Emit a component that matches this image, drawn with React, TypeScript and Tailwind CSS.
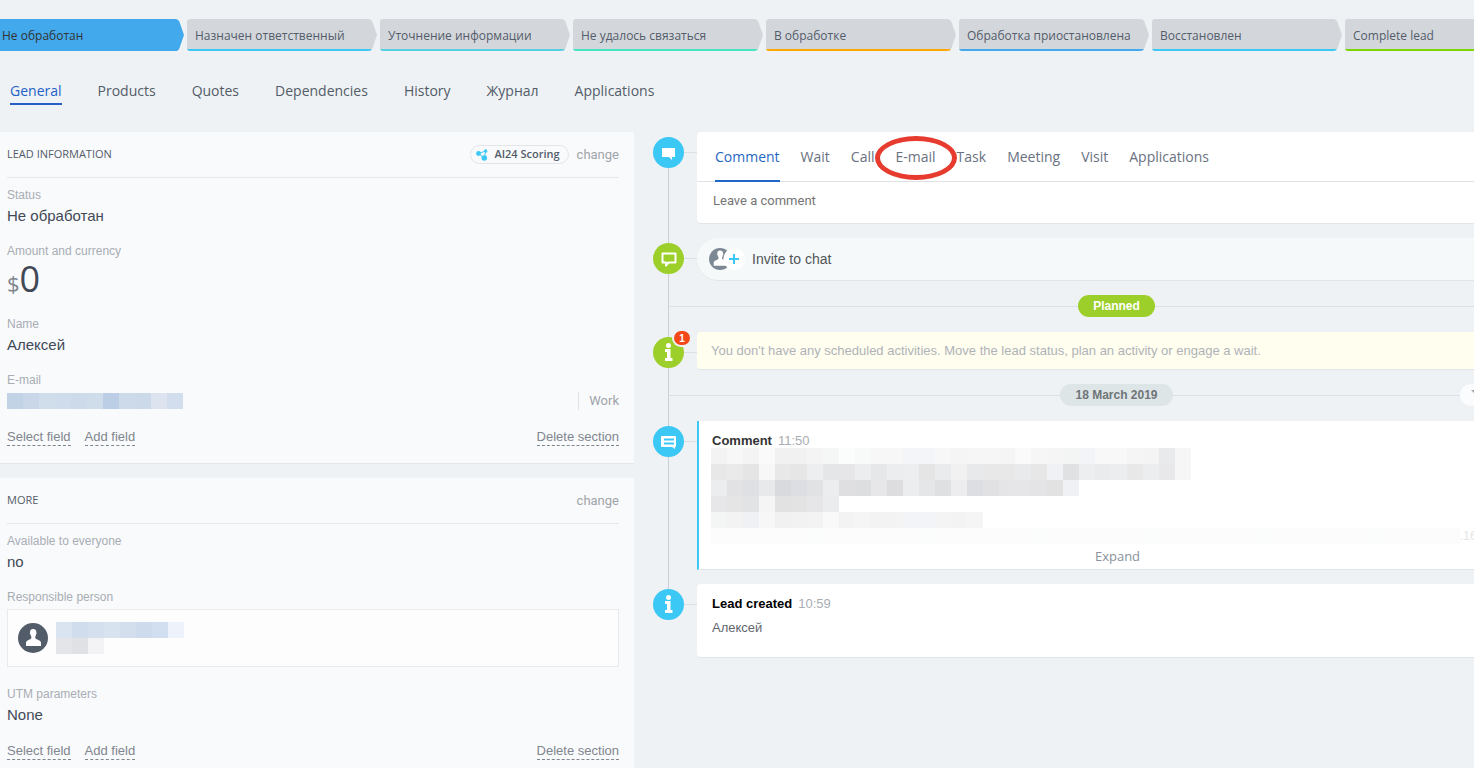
import { type ReactNode } from 'react';

const stages = [
  { title: 'Не обработан', color: '#42a9ed', active: true },
  { title: 'Назначен ответственный', color: '#3bc8f5' },
  { title: 'Уточнение информации', color: '#55d0e0' },
  { title: 'Не удалось связаться', color: '#47e4c2' },
  { title: 'В обработке', color: '#ffa900' },
  { title: 'Обработка приостановлена', color: '#42a9ed' },
  { title: 'Восстановлен', color: '#3bc8f5' },
  { title: 'Complete lead', color: '#7bd500' },
];

const sections = ['General', 'Products', 'Quotes', 'Dependencies', 'History', 'Журнал', 'Applications'];
const actions = ['Comment', 'Wait', 'Call', 'E-mail', 'Task', 'Meeting', 'Visit', 'Applications'];

const emailMask = ['c2d3e6', 'c9d7e9', 'd0deeb', 'cedceb', 'ccdaea', 'cfddea', 'bccee6', 'cddaea', 'cbd9e8', 'dde3ef', 'd2deed'];
const personMask = [
  ['d9e4f0', 'cfdded', 'd4e0ee', 'd8e3f0', 'd3dfed', 'cedbec', 'd2dff0', 'eef3fb'],
  ['e4e5e9', 'e0e1e5', 'f3f3f5'],
];
const commentMask = [
  ['f3f3f3', 'f7f7f7', 'f4f4f4', 'fafafa', 'f1f1f2', 'f1f1f2', 'f4f4f5', 'f5f6f6', 'fbfcfc', 'f8faf9', 'f7f7f7', 'f7f7f7', 'f4f5f8', 'f4f5f8', 'f7f7f7', 'f5f5f5', 'f6f6f6', 'f5f6f5', 'f5f5f5', 'fafafa', 'f6f6f6', 'f5f5f5', 'f3f4f4', 'f3f4f7', 'f8f8f8', 'f8f8f8', 'f5f5f5', 'f3f4f3', 'e9eaeb', 'f6f6f6'],
  ['e8e8e9', 'eaeaeb', 'e5e5e6', 'f7f7f7', 'e8e8e9', 'e6e6e7', 'edeef0', 'e5e6e7', 'e6e6e8', 'ecedef', 'e6e7e8', 'ecedef', 'edeef0', 'e5e5e6', 'eaebec', 'f1f1f1', 'e8e9ea', 'e8e8e9', 'e8e8e9', 'e9eaeb', 'e7e7e8', 'f0f1f4', 'e0e1e3', 'edeef0', 'eaebec', 'ecedee', 'e8e8e9', 'ecedee', 'e8e8ea', 'f6f6f6'],
  ['ecedef', 'e2e2e4', 'dfe0e4', 'e8e9ea', 'd9dadd', 'dddee3', 'e1e2e4', 'ecedef', 'dfdfe1', 'dddee0', 'e7e7e9', 'dddddf', 'ecedef', 'e5e6e7', 'dfe0e1', 'ededef', 'dddee4', 'e1e1e3', 'e5e5e7', 'e6e6e8', 'e4e4e6', 'e2e2e3', 'f0f1f4'],
  ['e7e7e9', 'e5e5e6', 'e2e3e4', 'f4f5f4', 'e2e2e3', 'e3e3e4', 'e6e6e8', 'ebecee'],
  ['f4f6f5', 'f3f3f3', 'f0f1f4', 'f7f7f7', 'f1f1f1', 'f2f2f2', 'f3f3f3', 'f9f9f9', 'f3f3f3', 'f5f5f5', 'f3f3f3', 'f3f3f3', 'f3f4f7', 'f3f4f7', 'f4f4f4', 'f3f3f3', 'f5f5f5'],
];
const fadedMask = Array.from({ length: 47 }, (_, i) => (i % 7 === 6 ? 'fbfdfc' : 'fcfcfc'));

function Mask({ cells }: { cells: string[] }) {
  return (
    <div className="flex">
      {cells.map((cell, i) => (
        <span key={i} className="h-4 w-4 shrink-0" style={{ backgroundColor: `#${cell}` }} />
      ))}
    </div>
  );
}

function Stage({ title, color, active }: { title: string; color: string; active?: boolean }) {
  return (
    <button className={`relative h-8 w-[190px] shrink-0 pt-0.5 pl-2 text-left text-xs ${active ? 'text-[#333]' : 'text-[#535c69]'}`}>
      <svg className="absolute inset-0" width="190" height="32" viewBox="0 0 190 32" aria-hidden="true">
        <path
          d="M3 0H181C183.500 0 184.500 1 185.500 3L190 16L185.500 29C184.500 31 183.500 32 181 32H3Q0 32 0 29V3Q0 0 3 0Z"
          fill={active ? color : '#d3d7dc'}
        />
        <path d="M0 30H185Q184 32 181 32H3Q1 32 0 30Z" fill={color} />
      </svg>
      <span className="relative whitespace-nowrap">{title}</span>
    </button>
  );
}

function Field({ label, children }: { label: string; children: ReactNode }) {
  return (
    <div className="mb-3.5">
      <div className="text-xs leading-5 text-[#a8adb4]">{label}</div>
      <div className="text-[15px] leading-[22px] text-[#424956]">{children}</div>
    </div>
  );
}

function PanelLinks() {
  const link = 'border-b border-dashed border-[#80868e] leading-4';
  return (
    <div className="flex h-[22px] items-center gap-3.5 text-[13px] text-[#80868e]">
      <a href="#select" className={link}>Select field</a>
      <a href="#add" className={link}>Add field</a>
      <a href="#delete" className={`ml-auto ${link}`}>Delete section</a>
    </div>
  );
}

function Panel({ title, badge, children }: { title: string; badge?: ReactNode; children: ReactNode }) {
  return (
    <section className="border-b border-[#e3e7ea] bg-[#f9fafc] pr-[15px] pb-[15px] pl-[7px]">
      <div className="mb-[7px] flex h-[46px] items-center border-b border-[#e6e8ea]">
        <h2 className="mr-auto font-['Open_Sans'] text-[11px] font-medium text-[#535c69] uppercase">{title}</h2>
        {badge}
        <button className="ml-2 font-[Roboto] text-[13px] text-[#a0a4a9]">change</button>
      </div>
      {children}
      <PanelLinks />
    </section>
  );
}

function ScoringBadge() {
  return (
    <button className="flex h-[19px] items-center gap-1.5 rounded-full border border-[#e3e6e9] px-[5px] pr-2 font-['Open_Sans'] text-[11px] font-semibold text-[#535c69]">
      <svg width="12" height="12" viewBox="0 0 12 12" fill="#3bc8f5" aria-hidden="true">
        <path d="M2.500 4.500L9.500 2M2.500 4.500L8.500 9L9.500 2" stroke="#3bc8f5" fill="none" />
        <circle cx="2.500" cy="4.500" r="2.400" />
        <circle cx="9.700" cy="2" r="1.700" />
        <circle cx="8.300" cy="9" r="2.800" />
      </svg>
      AI24 Scoring
    </button>
  );
}

function PersonShape() {
  return <path d="M15 6C12.700 6 11.900 7.600 12.100 9.300C11.600 9.500 11.800 11.300 12.500 11.600C12.600 12.600 13 13.200 13.300 13.600V15.300C12.700 16.600 8.300 17.400 8 19.500V23H23V19.500C22.700 17.400 18.300 16.600 17.300 15.300V13.600C17.700 13.100 18 12.500 18 11.600C18.700 11.300 18.800 9.500 18.300 9.300C18.500 7.300 17.600 6 15 6Z" fill="#fff" />;
}

function InfoShape() {
  return (
    <g fill="#fff">
      <circle cx="15.500" cy="8.500" r="2.500" />
      <path d="M12 12H17.500V21H19.500V24H12V21H14V15H12Z" />
    </g>
  );
}

interface TimelineRowProps {
  color: string;
  icon: ReactNode;
  badge?: string;
  className: string;
  children: ReactNode;
}

function TimelineRow({ color, icon, badge, className, children }: TimelineRowProps) {
  return (
    <div className="relative flex items-start">
      <div className="relative mt-[5px] flex w-11 shrink-0 items-center">
        <svg width="31" height="31" viewBox="0 0 31 31" aria-hidden="true">
          <circle cx="15.500" cy="15.500" r="15.500" fill={color} />
          {icon}
        </svg>
        <span className="h-px grow bg-[#d9dfe4]" />
        {badge && (
          <span className="absolute -top-1.5 left-[21px] flex h-3.5 w-4 items-center justify-center rounded-full bg-[#f54819] text-[10px] font-bold text-white ring-2 ring-[#eef2f4]">
            {badge}
          </span>
        )}
      </div>
      <div className={`min-w-0 grow border-b border-[#e2e6e9] ${className}`}>{children}</div>
    </div>
  );
}

function Divider({ label, className, children }: { label: string; className: string; children?: ReactNode }) {
  return (
    <div className="relative mb-px ml-4 flex h-[22px] items-center">
      {/* the label is centred over the cards, the line starts at the rail */}
      <span className="h-px w-7 bg-[#dbe1e4]" />
      <span className="h-px grow bg-[#dbe1e4]" />
      <span className={`rounded-full px-[15px] text-xs leading-[22px] font-bold ${className}`}>{label}</span>
      <span className="h-px grow bg-[#dbe1e4]" />
      {children}
    </div>
  );
}

function EntryTitle({ title, time, className }: { title: string; time: string; className: string }) {
  return (
    <div className="flex gap-1.5 pl-px text-[13px] leading-5">
      <span className={`font-bold ${className}`}>{title}</span>
      <span className="text-[#a8adb4]">{time}</span>
    </div>
  );
}

export default function App() {
  return (
    <div className="h-screen overflow-hidden bg-[#eef2f4] font-['Liberation_Sans',sans-serif]">
      <div className="-ml-1.5 flex gap-[3px] pt-[19px] font-['Open_Sans'] font-medium">
        {stages.map((stage) => (
          <Stage key={stage.title} {...stage} />
        ))}
      </div>

      <nav className="mt-7 flex gap-9 pl-2.5 font-['Open_Sans'] text-sm font-medium">
        {sections.map((name) => (
          <a
            key={name}
            href={`#${name}`}
            className={`border-b-2 leading-6 ${name === 'General' ? 'border-[#2360c8] text-[#2360c8]' : 'border-transparent text-[#535c69]'}`}
          >
            {name}
          </a>
        ))}
      </nav>

      <main className="-mr-[62px] mt-[27px] flex">
        {/* Lead fields */}
        <div className="flex w-[634px] shrink-0 flex-col gap-3.5">
          <Panel title="Lead information" badge={<ScoringBadge />}>
            <Field label="Status">Не обработан</Field>
            <Field label="Amount and currency">
              <div className="flex h-[39px] items-baseline font-['Open_Sans']">
                <span className="text-[22px] leading-none text-[#80868e]">$</span>
                <span className="text-4xl leading-[35px]">0</span>
              </div>
            </Field>
            <Field label="Name">Алексей</Field>
            <Field label="E-mail">
              <div className="flex h-[22px] items-center justify-between">
                <Mask cells={emailMask} />
                <span className="border-l border-[#dfe2e5] pl-2.5 font-[Roboto] text-[13px] leading-[18px] text-[#a0a4a9]">Work</span>
              </div>
            </Field>
          </Panel>

          <Panel title="More">
            <Field label="Available to everyone">no</Field>
            <Field label="Responsible person">
              <div className="mt-0.5 mb-[17px] flex h-[58px] items-center gap-2 border border-[#e8eaed] bg-[#fdfdfe] px-2.5">
                <svg width="30" height="30" viewBox="0 0 30 30" aria-hidden="true">
                  <circle cx="15" cy="15" r="15" fill="#535c69" />
                  <PersonShape />
                </svg>
                <div>
                  {personMask.map((cells, i) => (
                    <Mask key={i} cells={cells} />
                  ))}
                </div>
              </div>
            </Field>
            <Field label="UTM parameters">None</Field>
          </Panel>
        </div>

        {/* Timeline */}
        <div className="relative ml-[19px] flex min-w-0 grow flex-col gap-3.5">
          <span className="absolute top-5 left-[15px] h-[452px] w-px bg-[#c9d0d6]" />

          <TimelineRow color="#3bc8f5" className="rounded-l-sm bg-white" icon={<path d="M9 11H22V20H19V23L16 20H9Z" fill="#fff" />}>
            <div className="flex h-[50px] gap-[21px] border-b border-[#dfe3e7] pl-[18px] font-['Open_Sans'] text-sm">
              {actions.map((name) => (
                <button
                  key={name}
                  className={`relative -mb-px border-b-2 pt-0.5 ${name === 'Comment' ? 'border-[#1f67c4] text-[#1f67c4]' : 'border-transparent text-[#6a7180]'}`}
                >
                  {name}
                  {name === 'E-mail' && (
                    <span className="absolute top-1 -left-[21px] z-10 h-11 w-[82px] rounded-[50%] border-5 border-[#e63b2e]" />
                  )}
                </button>
              ))}
            </div>
            <input
              aria-label="Leave a comment"
              placeholder="Leave a comment"
              className="block h-[41px] w-full px-4 pb-1 font-[Roboto] text-[13px] outline-none placeholder:text-[#757575]"
            />
          </TimelineRow>

          <TimelineRow
            color="#9dcf2b"
            className="rounded-l-full bg-[#f5f9f9]"
            icon={<path d="M9.500 10.500H22.500V19.500H15.500L13 22.500V19.500H9.500Z" fill="none" stroke="#fff" strokeWidth="2" strokeLinejoin="round" />}
          >
            <button className="flex h-[42px] items-center gap-1.5 pl-3 text-sm text-[#525559]">
              <svg width="37" height="24" viewBox="0 0 37 24" aria-hidden="true">
                <circle cx="11" cy="12" r="11" fill="#7d8895" />
                <g transform="translate(-2.500 -2) scale(.9)">
                  <PersonShape />
                </g>
                <circle cx="25.200" cy="12" r="10.800" fill="#fff" />
                <path d="M25 7V17M20 12H30" stroke="#3bc8f5" strokeWidth="2" />
              </svg>
              Invite to chat
            </button>
          </TimelineRow>

          <Divider label="Planned" className="bg-[#9dcf2b] text-white" />

          <TimelineRow color="#9dcf2b" badge="1" className="rounded-l-sm bg-[#fffeef]" icon={<InfoShape />}>
            <p className="pl-3.5 text-[13px] leading-[37px] text-[#afb3b8]">
              You don't have any scheduled activities. Move the lead status, plan an activity or engage a wait.
            </p>
          </TimelineRow>

          <Divider label="18 March 2019" className="bg-[#dde5e7] text-[#6f7578]">
            <button aria-label="Filter" className="absolute right-[42px] flex h-[22px] w-[34px] items-center justify-center rounded-full bg-[#fbfcfd]">
              <svg width="12" height="10" viewBox="0 0 12 10" fill="#a0a6ad" aria-hidden="true">
                <path d="M0 0H12L7 5V10L5 8V5Z" />
              </svg>
            </button>
          </Divider>

          <TimelineRow
            color="#3bc8f5"
            className="border-l-2 border-l-[#3bc8f5] bg-white"
            icon={
              <g>
                <path d="M9 10H22Q23 10 23 11V20Q23 21 22 21V23L19 21H9Q8 21 8 20V11Q8 10 9 10Z" fill="#fff" />
                <path d="M11 13.500H21M11 17.500H21" stroke="#3bc8f5" strokeWidth="2" />
              </g>
            }
          >
            <div className="pt-2.5 pl-3">
              <EntryTitle title="Comment" time="11:50" className="text-[#333]" />
              <div className="-mt-[3px]">
                {commentMask.map((cells, i) => (
                  <Mask key={i} cells={cells} />
                ))}
              </div>
              <div className="flex items-center text-xs leading-4 text-[#e4e5e7]">
                <div className="w-[749px] overflow-hidden">
                  <Mask cells={fadedMask} />
                </div>
                .16
              </div>
            </div>
            <button className="block w-full pb-px font-['Open_Sans'] text-[13px] leading-6 text-[#8a919c]">Expand</button>
          </TimelineRow>

          <TimelineRow color="#3bc8f5" className="rounded-l-sm bg-white" icon={<InfoShape />}>
            <div className="pt-2.5 pb-[19px] pl-3.5">
              <EntryTitle title="Lead created" time="10:59" className="text-black" />
              <p className="pt-1 pl-px text-[13px] leading-5 text-[#62676f]">Алексей</p>
            </div>
          </TimelineRow>
        </div>
      </main>
    </div>
  );
}
